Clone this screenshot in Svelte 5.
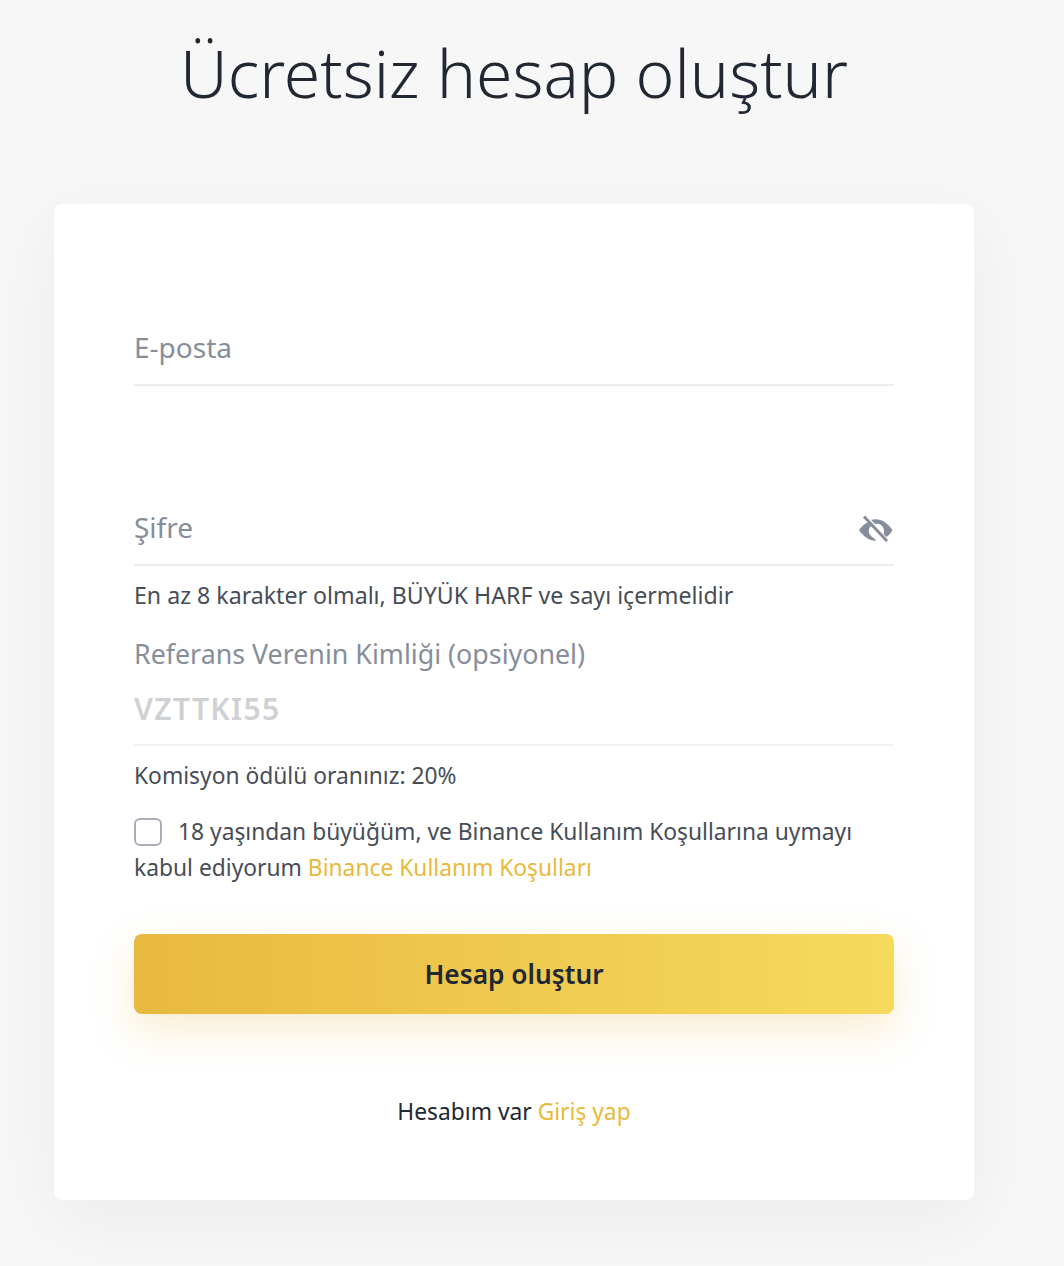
<script>
  let email = $state('')
  let password = $state('')
</script>

<div class="page">
  <h1>Ücretsiz hesap oluştur</h1>
  <form class="card">
    <div class="field">
      <input class="input" placeholder="E-posta" bind:value={email} />
    </div>
    <div class="field password">
      <input class="input" type="password" placeholder="Şifre" bind:value={password} />
      <svg class="eye" viewBox="0 0 36 30" width="36" height="30" aria-hidden="true">
        <path fill="#868e9b" d="M1 15 C4 11 7 8.500 10.500 7 L14 10.500 C11 12 10 16 11.500 19 C12.500 21 14 22 15.500 22.800 L18.500 25.800 C11 26 5 21 1 15 Z" />
        <path fill="#868e9b" d="M13 4.800 C21 2.500 29 6.500 34.500 15 C33 18 31 20 28.500 22 L25.500 19 C27 15.500 25.500 10.500 21 9 C20 8.600 18.500 8.600 17 9 Z" />
        <path stroke="#868e9b" stroke-width="3" fill="none" d="M6 1.500 L29 26" />
      </svg>
    </div>
    <p class="hint">En az 8 karakter olmalı, BÜYÜK HARF ve sayı içermelidir</p>
    <div class="label">Referans Verenin Kimliği (opsiyonel)</div>
    <div class="ref">VZTTKI55</div>
    <p class="commission">Komisyon ödülü oranınız: 20%</p>
    <div class="terms">
      <span class="checkbox"></span>18 yaşından büyüğüm, ve Binance Kullanım Koşullarına uymayı kabul ediyorum <span class="link">Binance Kullanım Koşulları</span>
    </div>
    <button type="button" class="submit">Hesap oluştur</button>
    <p class="login">Hesabım var <span class="link">Giriş yap</span></p>
  </form>
</div>

<style>
  :global(body) {
    margin: 0;
    background: #f7f7f7;
  }

  .page {
    height: 1266px;
    overflow: hidden;
    box-sizing: border-box;
    padding: 0 90px 0 54px;
    font-family: "Noto Sans", "Liberation Sans", sans-serif;
    color: #212833;
  }

  h1 {
    margin: 30px 0 0;
    height: 174px;
    font-size: 66px;
    line-height: 84px;
    font-weight: 300;
    text-align: center;
    color: #212833;
    white-space: nowrap;
  }

  .card {
    box-sizing: border-box;
    height: 996px;
    padding: 0 80px;
    background: #fff;
    border-radius: 8px;
    box-shadow: 0 20px 80px rgba(0, 0, 0, 0.05);
  }

  .field {
    height: 60px;
    padding-top: 120px;
    border-bottom: 2px solid #eaecef;
    display: flex;
  }

  .password {
    position: relative;
    padding-top: 118px;
  }

  .input {
    flex: 1;
    min-width: 0;
    border: 0;
    outline: 0;
    padding: 0;
    background: transparent;
    font: inherit;
    font-size: 28px;
    line-height: 46px;
    height: 46px;
  }

  .input::placeholder {
    color: #868e9b;
    opacity: 1;
  }

  .eye {
    position: absolute;
    right: 0;
    top: 129px;
  }

  .hint {
    margin: 13px 0 0;
    font-size: 23.15px;
    line-height: 32px;
    color: #474d57;
    white-space: nowrap;
  }

  .label {
    margin-top: 25px;
    font-size: 26.8px;
    line-height: 36px;
    color: #868e9b;
    white-space: nowrap;
  }

  .ref {
    margin-top: 19px;
    padding-bottom: 17px;
    border-bottom: 2px solid #f3f4f6;
    font-size: 30px;
    line-height: 36px;
    font-weight: 600;
    letter-spacing: 1.35px;
    color: #cfd1d4;
  }

  .commission {
    margin: 14px 0 0;
    font-size: 22.8px;
    line-height: 32px;
    color: #474d57;
  }

  .terms {
    margin-top: 22px;
    font-size: 22.8px;
    line-height: 36px;
    color: #474d57;
  }

  .checkbox {
    display: inline-block;
    box-sizing: border-box;
    width: 28px;
    height: 28px;
    margin-right: 16px;
    border: 2px solid #a9aeb8;
    border-radius: 6px;
    vertical-align: -6px;
  }

  .link {
    color: #e8b93b;
  }

  .submit {
    display: block;
    width: 100%;
    height: 80px;
    margin-top: 48px;
    border: 0;
    border-radius: 8px;
    background: linear-gradient(90deg, #e8b93f, #f6da5d);
    box-shadow: 0 16px 40px rgba(232, 185, 63, 0.25);
    font: inherit;
    font-size: 26.3px;
    font-weight: 600;
    color: #212833;
  }

  .login {
    margin: 82px 0 0;
    font-size: 22.8px;
    line-height: 32px;
    text-align: center;
    color: #212833;
  }
</style>
